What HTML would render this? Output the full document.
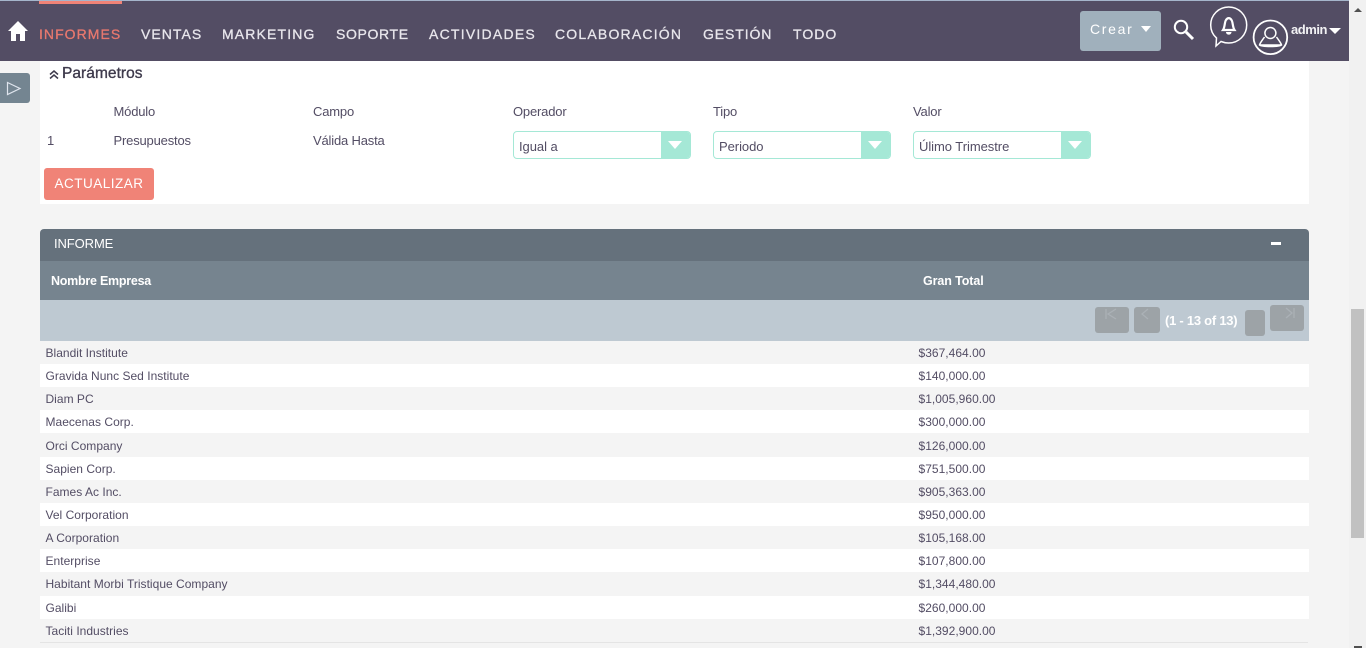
<!DOCTYPE html>
<html lang="es"><head><meta charset="utf-8"><title>Informe</title>
<style>
*{box-sizing:border-box}
html,body{margin:0;padding:0;width:1366px;height:648px;overflow:hidden;background:#f4f4f4;font-family:"Liberation Sans",sans-serif;color:#534d64}
.a{position:absolute;white-space:nowrap}
.nav{top:25px;font-size:14px;line-height:18px;letter-spacing:1.04px;color:#e8e6ec;-webkit-text-stroke:.3px currentColor}
.lbl{font-size:13px;line-height:16px;color:#534d64;letter-spacing:-.18px}
.sel{width:178px;height:28px;top:131px;background:#fff;border:1px solid #a5e8d6;border-radius:4px;font-size:13px;line-height:29px;padding-left:5px;color:#534d64;overflow:hidden;letter-spacing:-.05px}
.sel i{position:absolute;right:0;top:0;width:29px;height:100%;background:#a5e8d6}
.sel i:after{content:"";position:absolute;left:7px;top:9px;border-left:7px solid transparent;border-right:7px solid transparent;border-top:8px solid #fff}
.row{left:40px;width:1269px;height:23px}
.t{font-size:12px;line-height:14px;color:#534d64;margin-left:.5px;letter-spacing:.02px}
.pb{background:#9da3a7;border-radius:3px}
</style></head><body>
<div class="a" style="left:0;top:0;width:1349px;height:61px;background:#534d64;border-top:1px solid #a5b5cb"></div>
<div class="a" style="left:39px;top:1px;width:83px;height:3px;background:#f08377"></div>
<svg class="a" style="left:7px;top:20px" width="22" height="22" viewBox="0 0 22 22"><path d="M11 1 L21 11 L18 11 L18 21 L13 21 L13 14 L9 14 L9 21 L4 21 L4 11 L1 11 Z" fill="#fff"/></svg>
<div class="a nav" style="left:39px;color:#e8786e">INFORMES</div>
<div class="a nav" style="left:141px">VENTAS</div>
<div class="a nav" style="left:222px;letter-spacing:1.15px">MARKETING</div>
<div class="a nav" style="left:336px;letter-spacing:.64px">SOPORTE</div>
<div class="a nav" style="left:429px;letter-spacing:1.24px">ACTIVIDADES</div>
<div class="a nav" style="left:555px;letter-spacing:1.2px">COLABORACIÓN</div>
<div class="a nav" style="left:703px;letter-spacing:.9px">GESTIÓN</div>
<div class="a nav" style="left:793px">TODO</div>
<div class="a" style="left:1080px;top:11px;width:81px;height:40px;background:#a0b0bc;border-radius:3px"></div>
<div class="a" style="left:1090px;top:21px;font-size:14px;line-height:16px;letter-spacing:1.7px;color:#fff">Crear</div>
<div class="a" style="left:1141px;top:26px;border-left:5.5px solid transparent;border-right:5.5px solid transparent;border-top:6px solid #fff"></div>
<svg class="a" style="left:1170px;top:15px" width="28" height="28" viewBox="0 0 28 28" fill="none" stroke="#fff"><circle cx="11" cy="12" r="6.2" stroke-width="2"/><path d="M16 17 L23 24" stroke-width="3"/></svg>
<svg class="a" style="left:1208px;top:5px" width="42" height="44" viewBox="0 0 42 44" fill="none" stroke="#fff"><path d="M8.500 33 C4.500 29.500 2.700 25 2.700 20 C2.700 10 10.700 2 20.700 2 C30.700 2 38.700 10 38.700 20 C38.700 30 30.700 38 20.700 38 C18 38 15.500 37.500 13 36.500 L8 41 Z" stroke-width="1.500"/><path d="M15 25 C17 22 16.500 17 18 15 C19.500 12.500 22 12.500 23.500 15 C25 17 24.500 22 26.500 25 Z" stroke-width="2.200"/><path d="M18 27 C18 30.500 23.500 30.500 23.500 27 Z" fill="#fff" stroke="none"/></svg>
<svg class="a" style="left:1251px;top:18px" width="38" height="38" viewBox="0 0 38 38" fill="none" stroke="#fff"><circle cx="19.400" cy="19.300" r="16.800" stroke-width="1.800"/><circle cx="19.400" cy="15" r="5.500" stroke-width="1.500"/><path d="M13.500 19 C11.500 22 9 25 8.500 27 C9.500 28 12.500 28.500 19.400 28.500 C26.500 28.500 29.500 28 30.500 27 C30 25 27.500 22 25.500 19 M9 27 L30 27" stroke-width="1.500"/></svg>
<div class="a" style="left:1291px;top:21.500px;font-size:13px;line-height:16px;font-weight:bold;color:#f2f2f4;letter-spacing:-.45px">admin</div>
<div class="a" style="left:1329px;top:28px;border-left:6.500px solid transparent;border-right:6.500px solid transparent;border-top:6px solid #fff"></div>

<div class="a" style="left:0;top:73px;width:30px;height:30px;background:#748591;border-radius:0 3px 3px 0"></div>
<svg class="a" style="left:6px;top:81px" width="16" height="15" viewBox="0 0 16 15" fill="none" stroke="#dfe5ee" stroke-width="1.200"><path d="M1.500 1.500 L14 7.500 L1.500 13.500 Z"/></svg>

<div class="a" style="left:40px;top:61px;width:1269px;height:143px;background:#fff"></div>
<svg class="a" style="left:49px;top:69px" width="10" height="11" viewBox="0 0 10 11" fill="none" stroke="#3e3a4c" stroke-width="1.500"><path d="M1 5.500 L5 2 L9 5.500 M1 9.500 L5 6 L9 9.500"/></svg>
<div class="a" style="left:62px;top:65px;font-size:15.500px;line-height:18px;font-weight:normal;color:#3e3a4c;-webkit-text-stroke:.35px #3e3a4c;letter-spacing:.05px">Parámetros</div>
<div class="a lbl" style="left:113.500px;top:104px">Módulo</div>
<div class="a lbl" style="left:313px;top:104px">Campo</div>
<div class="a lbl" style="left:513px;top:104px">Operador</div>
<div class="a lbl" style="left:713px;top:104px">Tipo</div>
<div class="a lbl" style="left:913px;top:104px">Valor</div>
<div class="a lbl" style="left:47px;top:133px">1</div>
<div class="a lbl" style="left:113.500px;top:133px">Presupuestos</div>
<div class="a lbl" style="left:313px;top:133px">Válida Hasta</div>
<div class="a sel" style="left:513px">Igual a<i></i></div>
<div class="a sel" style="left:713px">Periodo<i></i></div>
<div class="a sel" style="left:913px">Úlimo Trimestre<i></i></div>
<div class="a" style="left:44px;top:168px;width:110px;height:32px;background:#f08377;border-radius:3px;color:#fff;font-size:13.500px;line-height:32px;text-align:center;letter-spacing:.5px">ACTUALIZAR</div>

<div class="a" style="left:40px;top:229px;width:1269px;height:32px;background:#65717c;border-radius:4px 4px 0 0"></div>
<div class="a" style="left:54px;top:236px;font-size:13px;line-height:16px;color:#fff;letter-spacing:-.1px">INFORME</div>
<div class="a" style="left:1271px;top:242px;width:10px;height:3px;background:#fff"></div>
<div class="a" style="left:40px;top:261px;width:1269px;height:39px;background:#76848f"></div>
<div class="a" style="left:51px;top:273px;font-size:12.500px;line-height:16px;font-weight:bold;color:#fff;letter-spacing:-.25px">Nombre Empresa</div>
<div class="a" style="left:923px;top:273px;font-size:12.500px;line-height:16px;font-weight:bold;color:#fff;letter-spacing:-.1px">Gran Total</div>
<div class="a" style="left:40px;top:300px;width:1269px;height:41px;background:#bec9d2"></div>
<div class="a pb" style="left:1095px;top:307px;width:34px;height:26px"></div>
<div class="a pb" style="left:1134px;top:307px;width:26px;height:26px"></div>
<div class="a pb" style="left:1245px;top:310px;width:20px;height:26px"></div>
<div class="a pb" style="left:1270px;top:305px;width:34px;height:26px"></div>
<svg class="a" style="left:1095px;top:305px" width="210" height="30" viewBox="0 0 210 30" fill="none" stroke="#abb1b6" stroke-width="1.300"><path d="M11 4 V14 M21 4 L13 9 L21 14 M53 4 L47 9 L53 14 M191 3 L197 8 L191 13 M199 3 V13"/></svg>
<div class="a" style="left:1165px;top:313px;font-size:13px;line-height:16px;font-weight:bold;color:#fff;letter-spacing:-.25px">(1 - 13 of 13)</div>

<div class="a row" style="top:341px;background:#f4f4f4"></div>
<div class="a row" style="top:364px;background:#fff"></div>
<div class="a row" style="top:387px;background:#f4f4f4"></div>
<div class="a row" style="top:410px;background:#fff"></div>
<div class="a row" style="top:434px;background:#f4f4f4"></div>
<div class="a row" style="top:457px;background:#fff"></div>
<div class="a row" style="top:480px;background:#f4f4f4"></div>
<div class="a row" style="top:503px;background:#fff"></div>
<div class="a row" style="top:526px;background:#f4f4f4"></div>
<div class="a row" style="top:549px;background:#fff"></div>
<div class="a row" style="top:572px;background:#f4f4f4"></div>
<div class="a row" style="top:596px;background:#fff"></div>
<div class="a row" style="top:619px;background:#f4f4f4"></div>
<div class="a" style="left:40px;top:642px;width:1268px;height:1px;background:#e4e4e4"></div>

<div class="a t" style="left:45px;top:346px">Blandit Institute</div><div class="a t" style="left:918px;top:346px">$367,464.00</div>
<div class="a t" style="left:45px;top:369px">Gravida Nunc Sed Institute</div><div class="a t" style="left:918px;top:369px">$140,000.00</div>
<div class="a t" style="left:45px;top:392px">Diam PC</div><div class="a t" style="left:918px;top:392px">$1,005,960.00</div>
<div class="a t" style="left:45px;top:415px">Maecenas Corp.</div><div class="a t" style="left:918px;top:415px">$300,000.00</div>
<div class="a t" style="left:45px;top:439px">Orci Company</div><div class="a t" style="left:918px;top:439px">$126,000.00</div>
<div class="a t" style="left:45px;top:462px">Sapien Corp.</div><div class="a t" style="left:918px;top:462px">$751,500.00</div>
<div class="a t" style="left:45px;top:485px">Fames Ac Inc.</div><div class="a t" style="left:918px;top:485px">$905,363.00</div>
<div class="a t" style="left:45px;top:508px">Vel Corporation</div><div class="a t" style="left:918px;top:508px">$950,000.00</div>
<div class="a t" style="left:45px;top:531px">A Corporation</div><div class="a t" style="left:918px;top:531px">$105,168.00</div>
<div class="a t" style="left:45px;top:554px">Enterprise</div><div class="a t" style="left:918px;top:554px">$107,800.00</div>
<div class="a t" style="left:45px;top:577px">Habitant Morbi Tristique Company</div><div class="a t" style="left:918px;top:577px">$1,344,480.00</div>
<div class="a t" style="left:45px;top:601px">Galibi</div><div class="a t" style="left:918px;top:601px">$260,000.00</div>
<div class="a t" style="left:45px;top:624px">Taciti Industries</div><div class="a t" style="left:918px;top:624px">$1,392,900.00</div>

<div class="a" style="left:1349px;top:0;width:17px;height:648px;background:#f1f1f1"></div>
<div class="a" style="left:1351px;top:309px;width:13px;height:229px;background:#c1c1c1"></div>
<div class="a" style="left:1354px;top:8px;border-left:4px solid transparent;border-right:4px solid transparent;border-bottom:4px solid #505050"></div>
<div class="a" style="left:1354px;top:646px;width:8px;height:2px;background:#505050"></div>
</body></html>
